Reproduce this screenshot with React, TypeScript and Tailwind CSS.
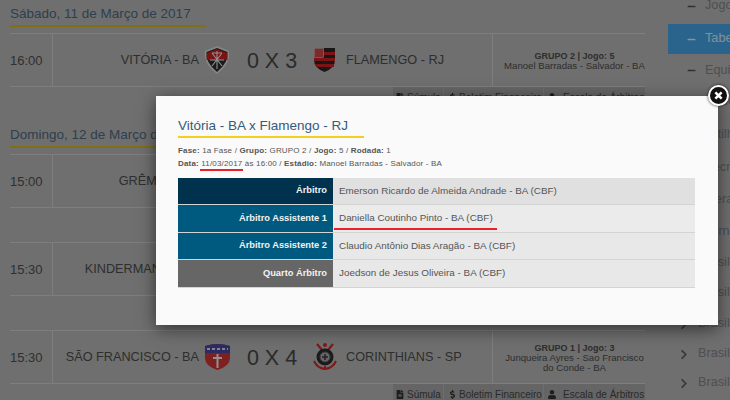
import { FaChevronRight, FaDollarSign, FaFileAlt, FaMinus, FaUser } from "react-icons/fa"

function VitoriaShield() {
  return (
    <svg width="28" height="30" viewBox="0 0 28 30">
      <path d="M14 1 L26 6 Q28 18 14 29 Q0 18 2 6 Z" fill="#e0e0e0" />
      <path d="M14 3 L24.500 7 Q26 17 14 27 Q2 17 3.500 7 Z" fill="#2e2e2e" />
      <path d="M14 4 L24 8 L24.500 15 L3.500 15 L4 8 Z" fill="#cf1e21" />
      <path d="M9 8 H19 M9 8 L19 21 M19 8 L9 21 M14 6 V24 M7 15 H21" stroke="#f0f0f0" strokeWidth="1.100" fill="none" />
    </svg>
  )
}

function FlamengoShield() {
  return (
    <svg width="23" height="26" viewBox="0 0 23 26">
      <path d="M1 1 H22 V13 Q22 21 11.500 25 Q1 21 1 13 Z" fill="#2d2626" />
      <path d="M1 5 H22 V8 H1 Z M1 11 H22 V14 H1 Z M2 17 H21 V20 H3.500 Z" fill="#d22023" />
      <rect x="1.500" y="1.500" width="9" height="9" fill="#d04646" stroke="#f0d0d0" strokeWidth="0.600" />
    </svg>
  )
}

function SaoFranciscoShield() {
  return (
    <svg width="27" height="28" viewBox="0 0 27 28">
      <path d="M1 3 Q13.500 -1 26 3 V15 Q26 23 13.500 27 Q1 23 1 15 Z" fill="#d23636" />
      <path d="M1 3 Q13.500 -1 26 3 V10 H1 Z" fill="#4a48a6" />
      <path d="M3 6 H24" stroke="#ddddf5" strokeWidth="2" strokeDasharray="3 2" />
      <path d="M13.500 11 V25 M9 15 H18" stroke="#f2f2f2" strokeWidth="2" />
    </svg>
  )
}

function CorinthiansCrest() {
  return (
    <svg width="24" height="30" viewBox="0 0 24 30">
      <path d="M4 2 L9 8 M20 2 L15 8" stroke="#d22b2b" strokeWidth="2.200" />
      <circle cx="12" cy="3" r="2" fill="#d22b2b" />
      <path d="M1 19 Q4 26 12 27 Q20 26 23 19" stroke="#d22b2b" strokeWidth="2" fill="none" />
      <path d="M12 24 V28" stroke="#d22b2b" strokeWidth="2" />
      <circle cx="12" cy="15" r="8.500" fill="#2d2d2d" />
      <circle cx="12" cy="15" r="5" fill="#aaaaaa" stroke="#646464" />
      <path d="M9 15 H15 M12 12 V18" stroke="#3a3a3a" strokeWidth="1.500" />
    </svg>
  )
}

function LinksBar() {
  return (
    <div className="ml-[383px] flex h-[20px] items-center whitespace-nowrap bg-[#a8a8a8] text-[10px] text-[#474747]">
      <span className="flex h-full w-[50px] shrink-0 items-center gap-[3px] pl-[3px]">
        <FaFileAlt className="h-[9px] w-[8px] shrink-0 text-[#333333]" />
        Súmula
      </span>
      <span className="flex h-full w-[100px] shrink-0 items-center gap-[3px] border-l border-[#b6b6b6] pl-[5px]">
        <FaDollarSign className="h-[9px] w-[7px] shrink-0 text-[#333333]" />
        Boletim Financeiro
      </span>
      <span className="flex h-full flex-1 items-center gap-[7px] border-l border-[#b6b6b6] pl-[4px]">
        <FaUser className="h-[9px] w-[8px] shrink-0 text-[#333333]" />
        Escala de Árbitros
      </span>
    </div>
  )
}

type Match = {
  time: string
  home: string
  away: string
  score?: string
  homeCrest?: React.ReactNode
  awayCrest?: React.ReactNode
  group?: string
  venue?: string
}

function MatchRow({ match }: { match: Match }) {
  return (
    <div>
      <div className="flex h-[54px] items-center border-y border-[#d2d2d2]">
        <div className="flex h-full w-[43px] shrink-0 items-center border-r border-[#d2d2d2] pt-[2px] text-[13px] text-[#505050]">
          {match.time}
        </div>
        <div className="w-[147px] shrink-0 whitespace-nowrap pr-[1px] pt-[2px] text-right text-[12.700px] text-[#4d4d4d]">
          {match.home}
        </div>
        <div className="flex w-[34px] shrink-0 justify-center">{match.homeCrest}</div>
        <div className="w-[76px] shrink-0 whitespace-nowrap pt-[2px] text-center text-[21.500px] text-[#484848]">
          {match.score}
        </div>
        <div className="flex w-[29px] shrink-0 justify-center">{match.awayCrest}</div>
        <div className="w-[153px] shrink-0 whitespace-nowrap pl-[7px] pt-[2px] text-[12.700px] text-[#4d4d4d]">
          {match.away}
        </div>
        <div className="flex h-full flex-1 flex-col items-center justify-center border-l border-[#d2d2d2] pl-[11px] pt-[2px] text-center text-[9.600px] leading-[10px] text-[#4d4d4d]">
          <span className="text-[9px] font-bold">{match.group}</span>
          <span>{match.venue}</span>
        </div>
      </div>
      <LinksBar />
    </div>
  )
}

const sideItems = [
  { label: "Jogos", size: "h-[34px]", kind: "dash", text: "text-[#858585]" },
  { label: "Tabela", size: "h-[30px] mt-[1px] bg-[#46a7e9]", kind: "dash", text: "text-[#d6f0ff]", icon: "text-[#e8f6ff]" },
  { label: "Equipes", size: "h-[31px] mt-[1px]", kind: "dash", text: "text-[#858585]" },
  { label: "Notícias", size: "h-[32px]", kind: "dash", text: "text-[#858585]" },
  { label: "Artilharia", size: "h-[34px]", kind: "dash", text: "text-[#858585]" },
  { label: "Técnica", size: "h-[32px]", kind: "dash", text: "text-[#858585]" },
  { label: "Geral", size: "h-[32px]", kind: "dash", text: "text-[#858585]" },
  { label: "Torneio", size: "h-[32px]", kind: "dash", text: "text-[#858585]" },
  { label: "Brasileiro", size: "h-[30px]", kind: "chevron", text: "text-[#858585]" },
  { label: "Brasileiro", size: "h-[30px]", kind: "chevron", text: "text-[#858585]" },
  { label: "Brasileiro", size: "h-[32px]", kind: "chevron", text: "text-[#858585]" },
  { label: "Brasileiro", size: "h-[28px]", kind: "chevron", text: "text-[#858585]" },
  { label: "Brasileiro", size: "h-[30px]", kind: "chevron", text: "text-[#858585]" },
]

const referees = [
  { role: "Árbitro", name: "Emerson Ricardo de Almeida Andrade - BA (CBF)", roleBg: "bg-[#00324d]", nameBg: "bg-[#e0e0e0]", size: "h-[27px]" },
  { role: "Árbitro Assistente 1", name: "Daniella Coutinho Pinto - BA (CBF)", roleBg: "bg-[#005a80]", nameBg: "bg-[#ebebeb]", size: "h-[28px]", marked: true },
  { role: "Árbitro Assistente 2", name: "Claudio Antônio Dias Aragão - BA (CBF)", roleBg: "bg-[#005a80]", nameBg: "bg-[#e8e8e8]", size: "h-[27px]" },
  { role: "Quarto Árbitro", name: "Joedson de Jesus Oliveira - BA (CBF)", roleBg: "bg-[#666666]", nameBg: "bg-[#e8e8e8]", size: "h-[28px]" },
]

export default function App() {
  return (
    <div className="relative h-[400px] w-[730px] overflow-hidden bg-[#b9b9b9] font-['Liberation_Sans',Arial,sans-serif]">
      <div className="flex h-full">
        {/* Jogos */}
        <div className="w-[668px] shrink-0 pl-[10px] pr-[23px]">
          <h2 className="mt-[4px] h-[23px] w-[196px] whitespace-nowrap border-b-2 border-[#d8ba24] text-[13.500px] leading-[20px] text-[#4e6985]">
            Sábado, 11 de Março de 2017
          </h2>
          <div className="mt-[6px]">
            <MatchRow
              match={{
                time: "16:00",
                home: "VITÓRIA - BA",
                away: "FLAMENGO - RJ",
                score: "0 X 3",
                homeCrest: <VitoriaShield />,
                awayCrest: <FlamengoShield />,
                group: "GRUPO 2 | Jogo: 5",
                venue: "Manoel Barradas - Salvador - BA",
              }}
            />
          </div>
          <h2 className="mt-[18px] h-[23px] w-[196px] whitespace-nowrap border-b-2 border-[#d8ba24] text-[13.500px] leading-[20px] text-[#4e6985]">
            Domingo, 12 de Março de 2017
          </h2>
          <div className="mt-[6px] flex flex-col gap-[14px]">
            <MatchRow match={{ time: "15:00", home: "GRÊMIO - RS", away: "" }} />
            <MatchRow match={{ time: "15:30", home: "KINDERMANN - SC", away: "" }} />
            <MatchRow
              match={{
                time: "15:30",
                home: "SÃO FRANCISCO - BA",
                away: "CORINTHIANS - SP",
                score: "0 X 4",
                homeCrest: <SaoFranciscoShield />,
                awayCrest: <CorinthiansCrest />,
                group: "GRUPO 1 | Jogo: 3",
                venue: "Junqueira Ayres - Sao Francisco do Conde - BA",
              }}
            />
          </div>
        </div>

        {/* Menu lateral */}
        <div className="mt-[-11px] w-[62px] shrink-0">
          {sideItems.map((item, i) => (
            <div key={i} className={`flex items-center whitespace-nowrap ${item.size}`}>
              {item.kind === "dash" ? (
                <>
                  <FaMinus className={`ml-[19px] h-[9px] w-[9px] shrink-0 ${item.icon ?? "text-[#505050]"}`} />
                  <span className={`ml-[9px] text-[12.700px] ${item.text}`}>{item.label}</span>
                </>
              ) : (
                <>
                  <FaChevronRight className="ml-[12px] h-[11px] w-[8px] shrink-0 text-[#606060]" />
                  <span className={`ml-[10px] text-[12.700px] ${item.text}`}>{item.label}</span>
                </>
              )}
            </div>
          ))}
        </div>
      </div>

      {/* Fundo escuro do modal */}
      <div className="absolute inset-0 bg-black/40" />

      {/* Modal */}
      <div className="absolute left-[156px] top-[96px] h-[229px] w-[562px] bg-[#fafafa] pl-[22px] pr-[23px] pt-[20px] shadow-[0_4px_16px_rgba(0,0,0,0.55)]">
        <h3 className="h-[22px] w-[186px] whitespace-nowrap border-b-2 border-[#f5cf1e] text-[13.500px] leading-[20px] text-[#345a7c]">
          Vitória - BA x Flamengo - RJ
        </h3>
        <div className="mt-[6px] text-[8px] leading-[13px] tracking-[0.17px] text-[#555555]">
          <p>
            <b>Fase:</b> 1a Fase / <b>Grupo:</b> GRUPO 2 / <b>Jogo:</b> 5 / <b>Rodada:</b> 1
          </p>
          <p>
            <b>Data:</b>{" "}
            <span className="relative">
              11/03/2017
              <span className="absolute bottom-[-3px] left-[-1px] right-[-1px] h-[2px] bg-[#e8212a]" />
            </span>{" "}
            às 16:00 / <b>Estádio:</b> Manoel Barradas - Salvador - BA
          </p>
        </div>
        <div className="mt-[8px]">
          {referees.map((r) => (
            <div key={r.role} className={`flex ${r.size} border-b border-[#d4d4d4]`}>
              <div className={`flex w-[155px] items-center justify-end pr-[6px] text-[9.300px] font-bold text-[#f2f2f2] ${r.roleBg}`}>
                {r.role}
              </div>
              <div className={`relative flex flex-1 items-center pl-[6px] text-[9.900px] text-[#555555] ${r.nameBg}`}>
                {r.name}
                {r.marked && <span className="absolute bottom-[2px] left-[1px] h-[2px] w-[163px] bg-[#e8212a]" />}
              </div>
            </div>
          ))}
        </div>
      </div>

      {/* Fechar */}
      <button className="absolute left-[708px] top-[85px] flex h-[21px] w-[21px] items-center justify-center rounded-full border-2 border-white bg-[#111111] shadow-[0_0_3px_rgba(0,0,0,0.8)]">
        <svg width="9" height="9" viewBox="0 0 10 10">
          <path d="M1.500 1.500 L8.500 8.500 M8.500 1.500 L1.500 8.500" stroke="white" strokeWidth="2.800" />
        </svg>
      </button>
    </div>
  )
}
